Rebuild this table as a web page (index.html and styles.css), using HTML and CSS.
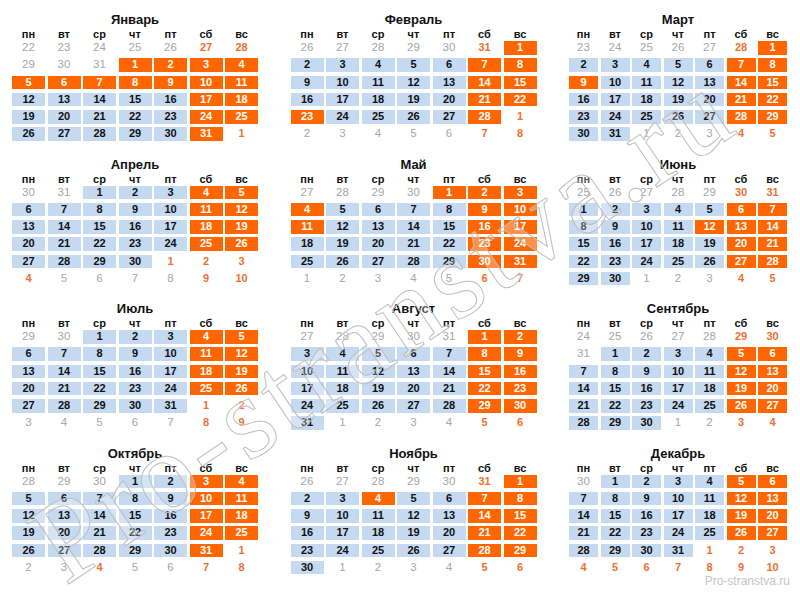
FILE: index.html
```html
<!DOCTYPE html>
<html lang="ru">
<head>
<meta charset="utf-8">
<title>Календарь 2015</title>
<link rel="stylesheet" href="styles.css">
</head>
<body>
<div class="page">
  <div class="quarter">
    <div class="month">
      <div class="title">Январь</div>
      <div class="wd"><span>пн</span><span>вт</span><span>ср</span><span>чт</span><span>пт</span><span>сб</span><span>вс</span></div>
      <div class="days">
        <span class="g">22</span><span class="g">23</span><span class="g">24</span><span class="g">25</span><span class="g">26</span><span class="r">27</span><span class="r">28</span>
        <span class="g">29</span><span class="g">30</span><span class="g">31</span><span class="h">1</span><span class="h">2</span><span class="h">3</span><span class="h">4</span>
        <span class="h">5</span><span class="h">6</span><span class="h">7</span><span class="h">8</span><span class="h">9</span><span class="h">10</span><span class="h">11</span>
        <span class="w">12</span><span class="w">13</span><span class="w">14</span><span class="w">15</span><span class="w">16</span><span class="h">17</span><span class="h">18</span>
        <span class="w">19</span><span class="w">20</span><span class="w">21</span><span class="w">22</span><span class="w">23</span><span class="h">24</span><span class="h">25</span>
        <span class="w">26</span><span class="w">27</span><span class="w">28</span><span class="w">29</span><span class="w">30</span><span class="h">31</span><span class="r">1</span>
      </div>
    </div>
    <div class="month">
      <div class="title">Февраль</div>
      <div class="wd"><span>пн</span><span>вт</span><span>ср</span><span>чт</span><span>пт</span><span>сб</span><span>вс</span></div>
      <div class="days">
        <span class="g">26</span><span class="g">27</span><span class="g">28</span><span class="g">29</span><span class="g">30</span><span class="r">31</span><span class="h">1</span>
        <span class="w">2</span><span class="w">3</span><span class="w">4</span><span class="w">5</span><span class="w">6</span><span class="h">7</span><span class="h">8</span>
        <span class="w">9</span><span class="w">10</span><span class="w">11</span><span class="w">12</span><span class="w">13</span><span class="h">14</span><span class="h">15</span>
        <span class="w">16</span><span class="w">17</span><span class="w">18</span><span class="w">19</span><span class="w">20</span><span class="h">21</span><span class="h">22</span>
        <span class="h">23</span><span class="w">24</span><span class="w">25</span><span class="w">26</span><span class="w">27</span><span class="h">28</span><span class="r">1</span>
        <span class="g">2</span><span class="g">3</span><span class="g">4</span><span class="g">5</span><span class="g">6</span><span class="r">7</span><span class="r">8</span>
      </div>
    </div>
    <div class="month narrow">
      <div class="title">Март</div>
      <div class="wd"><span>пн</span><span>вт</span><span>ср</span><span>чт</span><span>пт</span><span>сб</span><span>вс</span></div>
      <div class="days">
        <span class="g">23</span><span class="g">24</span><span class="g">25</span><span class="g">26</span><span class="g">27</span><span class="r">28</span><span class="h">1</span>
        <span class="w">2</span><span class="w">3</span><span class="w">4</span><span class="w">5</span><span class="w">6</span><span class="h">7</span><span class="h">8</span>
        <span class="h">9</span><span class="w">10</span><span class="w">11</span><span class="w">12</span><span class="w">13</span><span class="h">14</span><span class="h">15</span>
        <span class="w">16</span><span class="w">17</span><span class="w">18</span><span class="w">19</span><span class="w">20</span><span class="h">21</span><span class="h">22</span>
        <span class="w">23</span><span class="w">24</span><span class="w">25</span><span class="w">26</span><span class="w">27</span><span class="h">28</span><span class="h">29</span>
        <span class="w">30</span><span class="w">31</span><span class="g">1</span><span class="g">2</span><span class="g">3</span><span class="r">4</span><span class="r">5</span>
      </div>
    </div>
  </div>

  <div class="quarter">
    <div class="month">
      <div class="title">Апрель</div>
      <div class="wd"><span>пн</span><span>вт</span><span>ср</span><span>чт</span><span>пт</span><span>сб</span><span>вс</span></div>
      <div class="days">
        <span class="g">30</span><span class="g">31</span><span class="w">1</span><span class="w">2</span><span class="w">3</span><span class="h">4</span><span class="h">5</span>
        <span class="w">6</span><span class="w">7</span><span class="w">8</span><span class="w">9</span><span class="w">10</span><span class="h">11</span><span class="h">12</span>
        <span class="w">13</span><span class="w">14</span><span class="w">15</span><span class="w">16</span><span class="w">17</span><span class="h">18</span><span class="h">19</span>
        <span class="w">20</span><span class="w">21</span><span class="w">22</span><span class="w">23</span><span class="w">24</span><span class="h">25</span><span class="h">26</span>
        <span class="w">27</span><span class="w">28</span><span class="w">29</span><span class="w">30</span><span class="r">1</span><span class="r">2</span><span class="r">3</span>
        <span class="r">4</span><span class="g">5</span><span class="g">6</span><span class="g">7</span><span class="g">8</span><span class="r">9</span><span class="r">10</span>
      </div>
    </div>
    <div class="month">
      <div class="title">Май</div>
      <div class="wd"><span>пн</span><span>вт</span><span>ср</span><span>чт</span><span>пт</span><span>сб</span><span>вс</span></div>
      <div class="days">
        <span class="g">27</span><span class="g">28</span><span class="g">29</span><span class="g">30</span><span class="h">1</span><span class="h">2</span><span class="h">3</span>
        <span class="h">4</span><span class="w">5</span><span class="w">6</span><span class="w">7</span><span class="w">8</span><span class="h">9</span><span class="h">10</span>
        <span class="h">11</span><span class="w">12</span><span class="w">13</span><span class="w">14</span><span class="w">15</span><span class="h">16</span><span class="h">17</span>
        <span class="w">18</span><span class="w">19</span><span class="w">20</span><span class="w">21</span><span class="w">22</span><span class="h">23</span><span class="h">24</span>
        <span class="w">25</span><span class="w">26</span><span class="w">27</span><span class="w">28</span><span class="w">29</span><span class="h">30</span><span class="h">31</span>
        <span class="g">1</span><span class="g">2</span><span class="g">3</span><span class="g">4</span><span class="g">5</span><span class="r">6</span><span class="r">7</span>
      </div>
    </div>
    <div class="month narrow">
      <div class="title">Июнь</div>
      <div class="wd"><span>пн</span><span>вт</span><span>ср</span><span>чт</span><span>пт</span><span>сб</span><span>вс</span></div>
      <div class="days">
        <span class="g">25</span><span class="g">26</span><span class="g">27</span><span class="g">28</span><span class="g">29</span><span class="r">30</span><span class="r">31</span>
        <span class="w">1</span><span class="w">2</span><span class="w">3</span><span class="w">4</span><span class="w">5</span><span class="h">6</span><span class="h">7</span>
        <span class="w">8</span><span class="w">9</span><span class="w">10</span><span class="w">11</span><span class="h">12</span><span class="h">13</span><span class="h">14</span>
        <span class="w">15</span><span class="w">16</span><span class="w">17</span><span class="w">18</span><span class="w">19</span><span class="h">20</span><span class="h">21</span>
        <span class="w">22</span><span class="w">23</span><span class="w">24</span><span class="w">25</span><span class="w">26</span><span class="h">27</span><span class="h">28</span>
        <span class="w">29</span><span class="w">30</span><span class="g">1</span><span class="g">2</span><span class="g">3</span><span class="r">4</span><span class="r">5</span>
      </div>
    </div>
  </div>

  <div class="quarter">
    <div class="month">
      <div class="title">Июль</div>
      <div class="wd"><span>пн</span><span>вт</span><span>ср</span><span>чт</span><span>пт</span><span>сб</span><span>вс</span></div>
      <div class="days">
        <span class="g">29</span><span class="g">30</span><span class="w">1</span><span class="w">2</span><span class="w">3</span><span class="h">4</span><span class="h">5</span>
        <span class="w">6</span><span class="w">7</span><span class="w">8</span><span class="w">9</span><span class="w">10</span><span class="h">11</span><span class="h">12</span>
        <span class="w">13</span><span class="w">14</span><span class="w">15</span><span class="w">16</span><span class="w">17</span><span class="h">18</span><span class="h">19</span>
        <span class="w">20</span><span class="w">21</span><span class="w">22</span><span class="w">23</span><span class="w">24</span><span class="h">25</span><span class="h">26</span>
        <span class="w">27</span><span class="w">28</span><span class="w">29</span><span class="w">30</span><span class="w">31</span><span class="r">1</span><span class="r">2</span>
        <span class="g">3</span><span class="g">4</span><span class="g">5</span><span class="g">6</span><span class="g">7</span><span class="r">8</span><span class="r">9</span>
      </div>
    </div>
    <div class="month">
      <div class="title">Август</div>
      <div class="wd"><span>пн</span><span>вт</span><span>ср</span><span>чт</span><span>пт</span><span>сб</span><span>вс</span></div>
      <div class="days">
        <span class="g">27</span><span class="g">28</span><span class="g">29</span><span class="g">30</span><span class="g">31</span><span class="h">1</span><span class="h">2</span>
        <span class="w">3</span><span class="w">4</span><span class="w">5</span><span class="w">6</span><span class="w">7</span><span class="h">8</span><span class="h">9</span>
        <span class="w">10</span><span class="w">11</span><span class="w">12</span><span class="w">13</span><span class="w">14</span><span class="h">15</span><span class="h">16</span>
        <span class="w">17</span><span class="w">18</span><span class="w">19</span><span class="w">20</span><span class="w">21</span><span class="h">22</span><span class="h">23</span>
        <span class="w">24</span><span class="w">25</span><span class="w">26</span><span class="w">27</span><span class="w">28</span><span class="h">29</span><span class="h">30</span>
        <span class="w">31</span><span class="g">1</span><span class="g">2</span><span class="g">3</span><span class="g">4</span><span class="r">5</span><span class="r">6</span>
      </div>
    </div>
    <div class="month narrow">
      <div class="title">Сентябрь</div>
      <div class="wd"><span>пн</span><span>вт</span><span>ср</span><span>чт</span><span>пт</span><span>сб</span><span>вс</span></div>
      <div class="days">
        <span class="g">24</span><span class="g">25</span><span class="g">26</span><span class="g">27</span><span class="g">28</span><span class="r">29</span><span class="r">30</span>
        <span class="g">31</span><span class="w">1</span><span class="w">2</span><span class="w">3</span><span class="w">4</span><span class="h">5</span><span class="h">6</span>
        <span class="w">7</span><span class="w">8</span><span class="w">9</span><span class="w">10</span><span class="w">11</span><span class="h">12</span><span class="h">13</span>
        <span class="w">14</span><span class="w">15</span><span class="w">16</span><span class="w">17</span><span class="w">18</span><span class="h">19</span><span class="h">20</span>
        <span class="w">21</span><span class="w">22</span><span class="w">23</span><span class="w">24</span><span class="w">25</span><span class="h">26</span><span class="h">27</span>
        <span class="w">28</span><span class="w">29</span><span class="w">30</span><span class="g">1</span><span class="g">2</span><span class="r">3</span><span class="r">4</span>
      </div>
    </div>
  </div>

  <div class="quarter last">
    <div class="month">
      <div class="title">Октябрь</div>
      <div class="wd"><span>пн</span><span>вт</span><span>ср</span><span>чт</span><span>пт</span><span>сб</span><span>вс</span></div>
      <div class="days">
        <span class="g">28</span><span class="g">29</span><span class="g">30</span><span class="w">1</span><span class="w">2</span><span class="h">3</span><span class="h">4</span>
        <span class="w">5</span><span class="w">6</span><span class="w">7</span><span class="w">8</span><span class="w">9</span><span class="h">10</span><span class="h">11</span>
        <span class="w">12</span><span class="w">13</span><span class="w">14</span><span class="w">15</span><span class="w">16</span><span class="h">17</span><span class="h">18</span>
        <span class="w">19</span><span class="w">20</span><span class="w">21</span><span class="w">22</span><span class="w">23</span><span class="h">24</span><span class="h">25</span>
        <span class="w">26</span><span class="w">27</span><span class="w">28</span><span class="w">29</span><span class="w">30</span><span class="h">31</span><span class="r">1</span>
        <span class="g">2</span><span class="g">3</span><span class="r">4</span><span class="g">5</span><span class="g">6</span><span class="r">7</span><span class="r">8</span>
      </div>
    </div>
    <div class="month">
      <div class="title">Ноябрь</div>
      <div class="wd"><span>пн</span><span>вт</span><span>ср</span><span>чт</span><span>пт</span><span>сб</span><span>вс</span></div>
      <div class="days">
        <span class="g">26</span><span class="g">27</span><span class="g">28</span><span class="g">29</span><span class="g">30</span><span class="r">31</span><span class="h">1</span>
        <span class="w">2</span><span class="w">3</span><span class="h">4</span><span class="w">5</span><span class="w">6</span><span class="h">7</span><span class="h">8</span>
        <span class="w">9</span><span class="w">10</span><span class="w">11</span><span class="w">12</span><span class="w">13</span><span class="h">14</span><span class="h">15</span>
        <span class="w">16</span><span class="w">17</span><span class="w">18</span><span class="w">19</span><span class="w">20</span><span class="h">21</span><span class="h">22</span>
        <span class="w">23</span><span class="w">24</span><span class="w">25</span><span class="w">26</span><span class="w">27</span><span class="h">28</span><span class="h">29</span>
        <span class="w">30</span><span class="g">1</span><span class="g">2</span><span class="g">3</span><span class="g">4</span><span class="r">5</span><span class="r">6</span>
      </div>
    </div>
    <div class="month narrow">
      <div class="title">Декабрь</div>
      <div class="wd"><span>пн</span><span>вт</span><span>ср</span><span>чт</span><span>пт</span><span>сб</span><span>вс</span></div>
      <div class="days">
        <span class="g">30</span><span class="w">1</span><span class="w">2</span><span class="w">3</span><span class="w">4</span><span class="h">5</span><span class="h">6</span>
        <span class="w">7</span><span class="w">8</span><span class="w">9</span><span class="w">10</span><span class="w">11</span><span class="h">12</span><span class="h">13</span>
        <span class="w">14</span><span class="w">15</span><span class="w">16</span><span class="w">17</span><span class="w">18</span><span class="h">19</span><span class="h">20</span>
        <span class="w">21</span><span class="w">22</span><span class="w">23</span><span class="w">24</span><span class="w">25</span><span class="h">26</span><span class="h">27</span>
        <span class="w">28</span><span class="w">29</span><span class="w">30</span><span class="w">31</span><span class="r">1</span><span class="r">2</span><span class="r">3</span>
        <span class="r">4</span><span class="r">5</span><span class="r">6</span><span class="r">7</span><span class="r">8</span><span class="r">9</span><span class="r">10</span>
      </div>
    </div>
  </div>

  <div class="footer">Pro-stranstva.ru</div>
  <div class="watermark">Pro-stranstva.ru</div>
</div>
</body>
</html>
```

FILE: styles.css
```css
html, body {
  margin: 0;
  padding: 0;
  background: #ffffff;
}

.page {
  position: relative;
  width: 800px;
  height: 600px;
  overflow: hidden;
  box-sizing: border-box;
  padding: 11px 0 0 12px;
  font-family: "Liberation Sans", Arial, sans-serif;
  color: #111111;
}

.quarter {
  display: grid;
  grid-template-columns: 246px 246px 218px;
  column-gap: 32.5px;
  margin-bottom: 14.75px;
}

.quarter.last {
  margin-top: 5.5px;
  margin-bottom: 0;
}

.title {
  height: 17px;
  line-height: 17px;
  text-align: center;
  font-size: 13px;
  font-weight: bold;
  color: #111111;
}

.wd,
.days {
  display: grid;
  grid-template-columns: repeat(7, 1fr);
  column-gap: 2.5px;
}

.wd span {
  height: 13px;
  line-height: 13px;
  text-align: center;
  font-size: 11px;
  font-weight: bold;
  color: #111111;
}

.days {
  grid-auto-rows: 13.5px;
  row-gap: 3.75px;
}

.days span {
  line-height: 13.5px;
  text-align: center;
  font-size: 11px;
  font-weight: bold;
}

.days .w {
  background: #c5d9f1;
  color: #111111;
}

.days .h {
  background: #ff6600;
  color: #ffffff;
}

.days .g {
  color: #a6a6a6;
  font-weight: normal;
  font-size: 11.5px;
}

.days .r {
  color: #f07030;
}

.footer {
  text-align: right;
  padding-right: 10px;
  height: 14px;
  line-height: 14px;
  font-size: 12px;
  color: #c4c4c4;
}

.watermark {
  position: absolute;
  left: 76px;
  top: 486px;
  line-height: 1;
  font-family: "Liberation Serif", "Times New Roman", serif;
  font-size: 116px;
  letter-spacing: 5px;
  white-space: nowrap;
  color: rgba(255, 255, 255, 0.28);
  -webkit-text-stroke: 1px #bdbdbd;
  transform-origin: 0 100%;
  transform: rotate(-34deg);
  pointer-events: none;
}
```
